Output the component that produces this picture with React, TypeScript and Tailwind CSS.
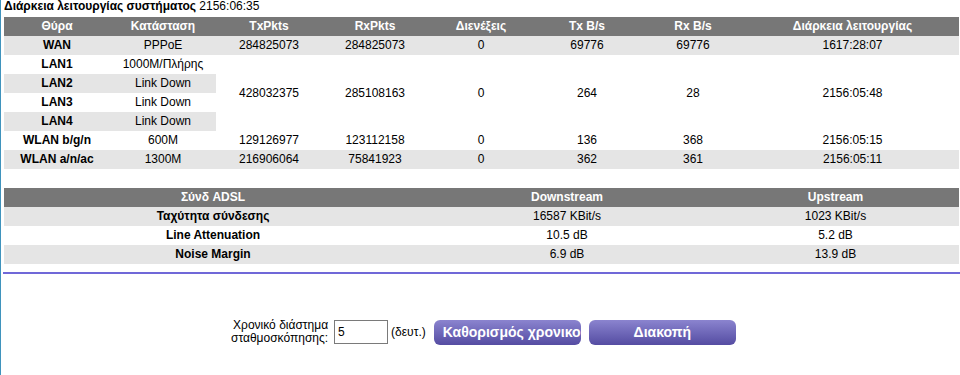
const ports = [
  { name: 'WAN', state: 'PPPoE', tx: '284825073', rx: '284825073', col: '0', txb: '69776', rxb: '69776', up: '1617:28:07' },
];

const adsl = [
  ['Ταχύτητα σύνδεσης', '16587 KBit/s', '1023 KBit/s'],
  ['Line Attenuation', '10.5 dB', '5.2 dB'],
  ['Noise Margin', '6.9 dB', '13.9 dB'],
];

export default function App() {
  return (
    <div className="min-h-[375px] border-l border-[#3f93bd] bg-white pl-[3px] font-['Liberation_Sans',Arial,sans-serif] text-[12px] text-black">
      <div className="h-[17px] leading-[13px]">
        <span className="font-bold">Διάρκεια λειτουργίας συστήματος</span> 2156:06:35
      </div>

      <table className="w-[955px] table-fixed border-collapse text-center leading-[19px]">
        <colgroup>
          <col className="w-[106px]" />
          <col className="w-[106px]" />
          <col className="w-[106px]" />
          <col className="w-[106px]" />
          <col className="w-[106px]" />
          <col className="w-[106px]" />
          <col className="w-[106px]" />
          <col />
        </colgroup>
        <thead>
          <tr className="h-[19px] bg-[#777777] font-bold text-white">
            <th className="p-0">Θύρα</th>
            <th className="p-0">Κατάσταση</th>
            <th className="p-0">TxPkts</th>
            <th className="p-0">RxPkts</th>
            <th className="p-0">Διενέξεις</th>
            <th className="p-0">Tx B/s</th>
            <th className="p-0">Rx B/s</th>
            <th className="p-0">Διάρκεια λειτουργίας</th>
          </tr>
        </thead>
        <tbody>
          {ports.map((p) => (
            <tr key={p.name} className="h-[19px] bg-[#e5e5e5]">
              <td className="p-0 font-bold">{p.name}</td>
              <td className="p-0">{p.state}</td>
              <td className="p-0">{p.tx}</td>
              <td className="p-0">{p.rx}</td>
              <td className="p-0">{p.col}</td>
              <td className="p-0">{p.txb}</td>
              <td className="p-0">{p.rxb}</td>
              <td className="p-0">{p.up}</td>
            </tr>
          ))}
          <tr className="h-[19px]">
            <td className="p-0 font-bold">LAN1</td>
            <td className="p-0">1000M/Πλήρης</td>
            <td rowSpan={4} className="p-0">428032375</td>
            <td rowSpan={4} className="p-0">285108163</td>
            <td rowSpan={4} className="p-0">0</td>
            <td rowSpan={4} className="p-0">264</td>
            <td rowSpan={4} className="p-0">28</td>
            <td rowSpan={4} className="p-0">2156:05:48</td>
          </tr>
          <tr className="h-[19px] bg-[#e5e5e5]">
            <td className="p-0 font-bold">LAN2</td>
            <td className="p-0">Link Down</td>
          </tr>
          <tr className="h-[19px]">
            <td className="p-0 font-bold">LAN3</td>
            <td className="p-0">Link Down</td>
          </tr>
          <tr className="h-[19px] bg-[#e5e5e5]">
            <td className="p-0 font-bold">LAN4</td>
            <td className="p-0">Link Down</td>
          </tr>
          <tr className="h-[19px]">
            <td className="p-0 font-bold">WLAN b/g/n</td>
            <td className="p-0">600M</td>
            <td className="p-0">129126977</td>
            <td className="p-0">123112158</td>
            <td className="p-0">0</td>
            <td className="p-0">136</td>
            <td className="p-0">368</td>
            <td className="p-0">2156:05:15</td>
          </tr>
          <tr className="h-[19px] bg-[#e5e5e5]">
            <td className="p-0 font-bold">WLAN a/n/ac</td>
            <td className="p-0">1300M</td>
            <td className="p-0">216906064</td>
            <td className="p-0">75841923</td>
            <td className="p-0">0</td>
            <td className="p-0">362</td>
            <td className="p-0">361</td>
            <td className="p-0">2156:05:11</td>
          </tr>
        </tbody>
      </table>

      <table className="mt-[19px] w-[955px] table-fixed border-collapse text-center leading-[19px]">
        <colgroup>
          <col className="w-[418px]" />
          <col className="w-[290px]" />
          <col />
        </colgroup>
        <thead>
          <tr className="h-[19px] bg-[#777777] font-bold text-white">
            <th className="p-0">Σύνδ ADSL</th>
            <th className="p-0">Downstream</th>
            <th className="p-0">Upstream</th>
          </tr>
        </thead>
        <tbody>
          {adsl.map((r, i) => (
            <tr key={r[0]} className={i % 2 === 0 ? 'h-[19px] bg-[#e5e5e5]' : 'h-[19px]'}>
              <td className="p-0 font-bold">{r[0]}</td>
              <td className="p-0">{r[1]}</td>
              <td className="p-0">{r[2]}</td>
            </tr>
          ))}
        </tbody>
      </table>

      <div className="mt-[8px] -ml-[1px] h-[2px] bg-[#7068d8]" />

      <div className="mt-[45px] ml-[227px] flex items-center">
        <div className="text-right leading-[13px]">
          Χρονικό διάστημα
          <br />
          σταθμοσκόπησης:
        </div>
        <input
          defaultValue="5"
          className="ml-[6px] h-[24px] w-[54px] border border-[#7a7a7a] px-[3px] text-[12px] outline-none"
        />
        <span className="ml-[3px]">(δευτ.)</span>
        <button className="ml-[8px] h-[25px] w-[147px] overflow-hidden whitespace-nowrap rounded-[6px] bg-linear-to-b from-[#8b84cf] to-[#554ca2] px-[9px] text-left text-[14px] font-bold text-white">
          Καθορισμός χρονικού διαστήματος
        </button>
        <button className="ml-[8px] h-[25px] w-[147px] rounded-[6px] bg-linear-to-b from-[#8b84cf] to-[#554ca2] text-center text-[14px] font-bold text-white">
          Διακοπή
        </button>
      </div>
    </div>
  );
}
